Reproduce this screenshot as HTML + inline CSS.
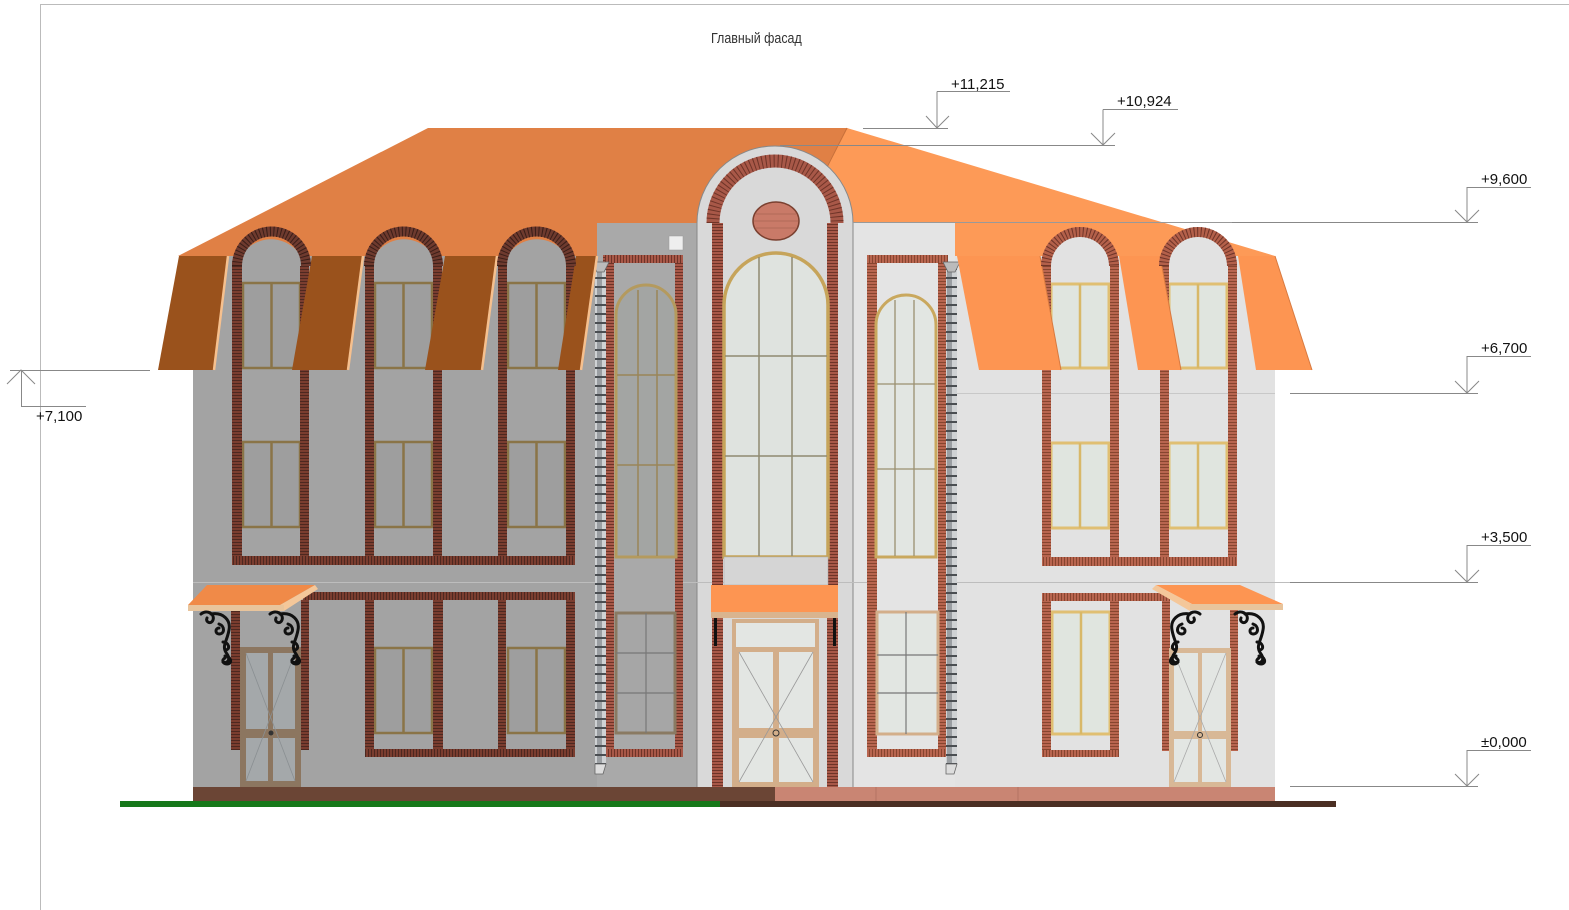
<!DOCTYPE html>
<html><head><meta charset="utf-8"><style>
html,body{margin:0;padding:0;background:#fff;}
svg{display:block;}
text{font-family:"Liberation Sans",sans-serif;}
</style></head><body>
<svg width="1569" height="910" viewBox="0 0 1569 910" xmlns="http://www.w3.org/2000/svg">
<defs>
<pattern id="pvL" width="10" height="3" patternUnits="userSpaceOnUse"><rect width="10" height="3" fill="#7a3d2f"/><rect y="2" width="10" height="1" fill="#4d2820"/></pattern>
<pattern id="phL" width="3" height="10" patternUnits="userSpaceOnUse"><rect width="3" height="10" fill="#7a3d2f"/><rect x="2" width="1" height="10" fill="#4d2820"/></pattern>
<pattern id="pvC" width="10" height="3" patternUnits="userSpaceOnUse"><rect width="10" height="3" fill="#a85848"/><rect y="2" width="10" height="1" fill="#6e3428"/></pattern>
<pattern id="phC" width="3" height="10" patternUnits="userSpaceOnUse"><rect width="3" height="10" fill="#a85848"/><rect x="2" width="1" height="10" fill="#6e3428"/></pattern>
<pattern id="pvR" width="10" height="3" patternUnits="userSpaceOnUse"><rect width="10" height="3" fill="#b8654f"/><rect y="2" width="10" height="1" fill="#87452f"/></pattern>
<pattern id="phR" width="3" height="10" patternUnits="userSpaceOnUse"><rect width="3" height="10" fill="#b8654f"/><rect x="2" width="1" height="10" fill="#87452f"/></pattern>
<pattern id="pipe" width="10" height="9" patternUnits="userSpaceOnUse"><rect width="10" height="9" fill="#9a9ea2"/><rect x="2" width="5" height="9" fill="#cfd2d4"/><rect y="7" width="10" height="2" fill="#4a4e52"/></pattern>
<g id="bracket" fill="none" stroke="#111" stroke-width="3" stroke-linecap="round">
<path d="M0,2 C6,-3 14,2 12,8 C10,13 4,10 6,6"/>
<path d="M10,2 C22,0 30,8 28,18 C26,30 20,34 26,42 C30,48 26,52 22,50"/>
<path d="M18,12 C24,14 24,22 18,22 C14,22 14,16 18,16"/>
<path d="M22,30 C28,30 30,38 24,38"/>
<path d="M24,44 C30,44 32,52 26,52 C22,52 20,48 24,46"/>
</g>
</defs>

<line x1="40" y1="4.5" x2="1569" y2="4.5" stroke="#bbb" stroke-width="1"/>
<line x1="40.5" y1="4" x2="40.5" y2="910" stroke="#bbb" stroke-width="1"/>
<text x="711" y="43" font-size="14.5" fill="#333" transform="translate(711 0) scale(0.86 1) translate(-711 0)">Главный фасад</text>

<polygon points="178,256 428,128 847,128 780,256" fill="#e08045"/>
<polygon points="847,128 1275,256 780,256" fill="#fd9a57"/>
<line x1="847" y1="128" x2="800" y2="220" stroke="#c8703a" stroke-width="1"/>

<rect x="193" y="256" width="404" height="532" fill="#a3a3a3"/>
<rect x="597" y="223" width="100" height="565" fill="#a9a9a9"/>
<rect x="853" y="223" width="102" height="565" fill="#e4e4e4"/>
<rect x="955" y="256" width="320" height="532" fill="#e2e2e2"/>
<path d="M697,788 V223 A78,77 0 0 1 853,223 V788 Z" fill="#d9d9d9" stroke="#888" stroke-width="1"/>

<line x1="955" y1="393.5" x2="1275" y2="393.5" stroke="#c8c8c8"/>
<line x1="193" y1="582.5" x2="1478" y2="582.5" stroke="#bdbdbd"/>
<line x1="853" y1="222.5" x2="1478" y2="222.5" stroke="#999"/>

<g fill="#9e9e9e" stroke="#8a7447" stroke-width="2.5">
<rect x="243" y="283" width="57" height="85"/><rect x="375" y="283" width="57" height="85"/><rect x="508" y="283" width="57" height="85"/>
<rect x="243" y="442" width="57" height="85"/><rect x="375" y="442" width="57" height="85"/><rect x="508" y="442" width="57" height="85"/>
<rect x="375" y="648" width="57" height="85"/><rect x="508" y="648" width="57" height="85"/>
</g>
<g stroke="#8a7447" stroke-width="2.5">
<line x1="271.5" y1="283" x2="271.5" y2="368"/><line x1="403.5" y1="283" x2="403.5" y2="368"/><line x1="536.5" y1="283" x2="536.5" y2="368"/>
<line x1="271.5" y1="442" x2="271.5" y2="527"/><line x1="403.5" y1="442" x2="403.5" y2="527"/><line x1="536.5" y1="442" x2="536.5" y2="527"/>
<line x1="403.5" y1="648" x2="403.5" y2="733"/><line x1="536.5" y1="648" x2="536.5" y2="733"/>
</g>
<g fill="url(#pvL)">
<rect x="232" y="262" width="10" height="300"/><rect x="300" y="262" width="9" height="300"/>
<rect x="365" y="262" width="9" height="300"/><rect x="433" y="262" width="9" height="300"/>
<rect x="498" y="262" width="9" height="300"/><rect x="566" y="262" width="9" height="300"/>
<rect x="365" y="592" width="9" height="164"/><rect x="433" y="592" width="10" height="164"/>
<rect x="498" y="592" width="8" height="164"/><rect x="566" y="592" width="9" height="164"/>
<rect x="231" y="610" width="9" height="140"/><rect x="301" y="600" width="8" height="150"/>
</g>
<g fill="url(#phL)">
<rect x="232" y="556" width="343" height="9"/>
<rect x="303" y="592" width="272" height="8"/>
<rect x="365" y="749" width="210" height="8"/>
</g>
<rect x="240" y="647" width="61" height="141" fill="#8c7660"/>
<rect x="246" y="653" width="22" height="76" fill="#a4a8aa"/><rect x="273" y="653" width="22" height="76" fill="#a4a8aa"/>
<rect x="246" y="738" width="22" height="43" fill="#a4a8aa"/><rect x="273" y="738" width="22" height="43" fill="#a4a8aa"/>
<g stroke="#8a8f92" stroke-width="0.8"><line x1="246" y1="653" x2="295" y2="781"/><line x1="295" y1="653" x2="246" y2="781"/></g>
<circle cx="271" cy="733" r="2.5" fill="#333"/>

<rect x="669" y="236" width="14" height="14" fill="#eee" stroke="#999" stroke-width="0.5"/>
<rect x="603" y="255" width="80" height="502" fill="url(#pvC)"/>
<rect x="605" y="255" width="78" height="8" fill="url(#phC)"/>
<rect x="605" y="749" width="78" height="8" fill="url(#phC)"/>
<rect x="614" y="263" width="61" height="486" fill="#a9a9a9"/>
<path d="M616,557 V315 A30,30 0 0 1 676,315 V557 Z" fill="#a3a5a3" stroke="#b49a5e" stroke-width="3"/>
<g stroke="#9a8558" stroke-width="1.5"><line x1="638" y1="290" x2="638" y2="556"/><line x1="657" y1="290" x2="657" y2="556"/><line x1="617" y1="375" x2="675" y2="375"/><line x1="617" y1="465" x2="675" y2="465"/></g>
<rect x="616" y="613" width="59" height="120" fill="#a6a6a6" stroke="#8a7a62" stroke-width="3"/>
<g stroke="#777" stroke-width="1.2"><line x1="646" y1="613" x2="646" y2="733"/><line x1="616" y1="653" x2="675" y2="653"/><line x1="616" y1="693" x2="675" y2="693"/></g>
<rect x="595" y="264" width="11" height="500" fill="url(#pipe)"/>
<polygon points="592,262 609,262 604,272 597,272" fill="#bbb" stroke="#666" stroke-width="0.8"/>
<path d="M595,764 h11 l-3,10 h-8 z" fill="#ddd" stroke="#666" stroke-width="0.8"/>

<path d="M713,223 A62,62 0 0 1 837,223" fill="none" stroke="#a85848" stroke-width="13"/>
<path d="M713,223 A62,62 0 0 1 837,223" fill="none" stroke="#6e3428" stroke-width="13" stroke-dasharray="1 3"/>
<rect x="712" y="223" width="11" height="565" fill="url(#pvC)"/>
<rect x="827" y="223" width="11" height="565" fill="url(#pvC)"/>
<ellipse cx="776" cy="221" rx="23" ry="19" fill="#c97a68" stroke="#7a4030" stroke-width="1.5"/>
<g stroke="#a86454" stroke-width="0.8"><line x1="756" y1="214" x2="796" y2="214"/><line x1="754" y1="221" x2="798" y2="221"/><line x1="756" y1="228" x2="796" y2="228"/></g>
<path d="M724,557 V305 A52,52 0 0 1 828,305 V557 Z" fill="#dfe3df" stroke="#c6a45a" stroke-width="3.5"/>
<g stroke="#8f8a70" stroke-width="1.5"><line x1="759" y1="257" x2="759" y2="556"/><line x1="792" y1="257" x2="792" y2="556"/><line x1="725" y1="356" x2="827" y2="356"/><line x1="725" y1="456" x2="827" y2="456"/></g>
<rect x="724" y="557" width="104" height="28" fill="#d5d5d5" stroke="#aaa" stroke-width="0.5"/>
<rect x="711" y="585" width="127" height="28" fill="#fd9552"/>
<rect x="711" y="612" width="127" height="6" fill="#d9b48f"/>
<rect x="714" y="618" width="3" height="28" fill="#111"/><rect x="833" y="618" width="3" height="28" fill="#111"/>
<rect x="732" y="619" width="87" height="169" fill="#d3ae8a"/>
<rect x="736" y="623" width="79" height="24" fill="#e3e6e3"/>
<rect x="739" y="652" width="34" height="76" fill="#e3e6e3"/><rect x="779" y="652" width="34" height="76" fill="#e3e6e3"/>
<rect x="739" y="738" width="34" height="44" fill="#e3e6e3"/><rect x="779" y="738" width="34" height="44" fill="#e3e6e3"/>
<g stroke="#999" stroke-width="0.8"><line x1="739" y1="652" x2="813" y2="782"/><line x1="813" y1="652" x2="739" y2="782"/></g>
<circle cx="776" cy="733" r="3" fill="none" stroke="#333"/>

<rect x="867" y="255" width="81" height="502" fill="url(#pvR)"/>
<rect x="867" y="255" width="81" height="8" fill="url(#phR)"/>
<rect x="867" y="749" width="81" height="8" fill="url(#phR)"/>
<rect x="877" y="263" width="61" height="486" fill="#e4e4e4"/>
<path d="M876,557 V325 A30,30 0 0 1 936,325 V557 Z" fill="#e2e6e2" stroke="#c9a85e" stroke-width="3"/>
<g stroke="#9a9070" stroke-width="1.3"><line x1="895" y1="300" x2="895" y2="556"/><line x1="914" y1="300" x2="914" y2="556"/><line x1="877" y1="384" x2="935" y2="384"/><line x1="877" y1="469" x2="935" y2="469"/></g>
<rect x="877" y="612" width="61" height="122" fill="#e2e6e2" stroke="#d3ae8a" stroke-width="3"/>
<g stroke="#777" stroke-width="1.2"><line x1="906" y1="612" x2="906" y2="734"/><line x1="877" y1="655" x2="938" y2="655"/><line x1="877" y1="693" x2="938" y2="693"/></g>
<rect x="946" y="264" width="11" height="500" fill="url(#pipe)"/>
<polygon points="943,262 960,262 955,272 948,272" fill="#bbb" stroke="#666" stroke-width="0.8"/>
<path d="M946,764 h11 l-3,10 h-8 z" fill="#ddd" stroke="#666" stroke-width="0.8"/>

<g fill="#e0e5df" stroke="#e0bf72" stroke-width="3">
<rect x="1051" y="284" width="58" height="84"/><rect x="1169" y="284" width="58" height="84"/>
<rect x="1051" y="443" width="58" height="85"/><rect x="1169" y="443" width="58" height="85"/>
<rect x="1052" y="612" width="58" height="122"/>
</g>
<g stroke="#d8b868" stroke-width="2.5">
<line x1="1080" y1="284" x2="1080" y2="368"/><line x1="1198" y1="284" x2="1198" y2="368"/>
<line x1="1080" y1="443" x2="1080" y2="528"/><line x1="1198" y1="443" x2="1198" y2="528"/>
<line x1="1081" y1="612" x2="1081" y2="734"/>
</g>
<g fill="url(#pvR)">
<rect x="1042" y="262" width="9" height="300"/><rect x="1110" y="262" width="9" height="300"/>
<rect x="1160" y="262" width="9" height="300"/><rect x="1228" y="262" width="9" height="300"/>
<rect x="1042" y="593" width="9" height="164"/><rect x="1110" y="600" width="9" height="157"/>
<rect x="1162" y="593" width="8" height="158"/><rect x="1230" y="600" width="8" height="151"/>
</g>
<g fill="url(#phR)">
<rect x="1042" y="557" width="195" height="9"/>
<rect x="1042" y="593" width="128" height="8"/>
<rect x="1042" y="750" width="77" height="7"/>
</g>
<rect x="1169" y="648" width="62" height="140" fill="#d8b896"/>
<rect x="1174" y="653" width="24" height="78" fill="#e3e6e3"/><rect x="1202" y="653" width="24" height="78" fill="#e3e6e3"/>
<rect x="1174" y="739" width="24" height="43" fill="#e3e6e3"/><rect x="1202" y="739" width="24" height="43" fill="#e3e6e3"/>
<g stroke="#aaa" stroke-width="0.8"><line x1="1174" y1="653" x2="1226" y2="782"/><line x1="1226" y1="653" x2="1174" y2="782"/></g>
<circle cx="1200" cy="735" r="2.5" fill="none" stroke="#333"/>

<g fill="#9a521c">
<polygon points="179,256 228,256 214,370 158,370"/>
<polygon points="312,256 363,256 348,370 292,370"/>
<polygon points="445,256 497,256 482,370 425,370"/>
<polygon points="576,256 597,256 581,370 558,370"/>
</g>
<g stroke="#f6c08e" stroke-width="2.5">
<line x1="228" y1="256" x2="214" y2="370"/><line x1="363" y1="256" x2="348" y2="370"/><line x1="497" y1="256" x2="482" y2="370"/><line x1="597" y1="256" x2="581" y2="370"/>
</g>
<g fill="#fd9552">
<polygon points="957,256 1040,256 1061,370 979,370"/>
<polygon points="1119,256 1160,256 1181,370 1138,370"/>
<polygon points="1238,256 1275,256 1312,370 1256,370"/>
</g>
<g stroke="#d87a40" stroke-width="1">
<line x1="1040" y1="256" x2="1061" y2="370"/><line x1="1160" y1="256" x2="1181" y2="370"/><line x1="1275" y1="256" x2="1312" y2="370"/>
</g>

<g>
<path d="M237,266 A35,35 0 0 1 305,266 Z" fill="#a3a3a3"/>
<path d="M370,266 A35,35 0 0 1 438,266 Z" fill="#a3a3a3"/>
<path d="M503,266 A35,35 0 0 1 571,266 Z" fill="#a3a3a3"/>
</g>
<g fill="none" stroke="#6e3a2e" stroke-width="10">
<path d="M237,266 A34.5,34.5 0 0 1 306,266"/><path d="M369,266 A34.5,34.5 0 0 1 438,266"/><path d="M502,266 A34.5,34.5 0 0 1 571,266"/>
</g>
<g fill="none" stroke="#3a1e18" stroke-width="10" stroke-dasharray="1 2.5">
<path d="M237,266 A34.5,34.5 0 0 1 306,266"/><path d="M369,266 A34.5,34.5 0 0 1 438,266"/><path d="M502,266 A34.5,34.5 0 0 1 571,266"/>
</g>
<g>
<path d="M1046,266 A34,34 0 0 1 1114,266 Z" fill="#e2e2e2"/>
<path d="M1164,266 A34,34 0 0 1 1232,266 Z" fill="#e2e2e2"/>
</g>
<g fill="none" stroke="#b3604a" stroke-width="10">
<path d="M1046,266 A34,34 0 0 1 1114,266"/><path d="M1164,266 A34,34 0 0 1 1232,266"/>
</g>
<g fill="none" stroke="#6e3428" stroke-width="10" stroke-dasharray="1 2.5">
<path d="M1046,266 A34,34 0 0 1 1114,266"/><path d="M1164,266 A34,34 0 0 1 1232,266"/>
</g>

<polygon points="207,585 315,585 280,605 188,605" fill="#f08a48"/>
<polygon points="280,605 315,585 318,589 284,611" fill="#f4c79a"/>
<rect x="188" y="605" width="96" height="6" fill="#e8c49c"/>
<use href="#bracket" x="201" y="612"/>
<use href="#bracket" x="270" y="612"/>
<polygon points="1156,585 1240,585 1283,604 1192,604" fill="#fd9552"/>
<polygon points="1156,585 1192,604 1190,611 1152,589" fill="#f4c79a"/>
<rect x="1190" y="604" width="93" height="6" fill="#e8c49c"/>
<use href="#bracket" x="1200" y="612" transform="translate(2400 0) scale(-1 1)"/>
<use href="#bracket" x="1235" y="612"/>

<rect x="193" y="787" width="582" height="14" fill="#6b4535"/>
<rect x="775" y="787" width="500" height="14" fill="#c98573"/>
<line x1="876" y1="787" x2="876" y2="801" stroke="#b07060" stroke-width="0.8"/>
<line x1="1018" y1="787" x2="1018" y2="801" stroke="#b07060" stroke-width="0.8"/>
<rect x="120" y="801" width="600" height="6" fill="#16781a"/>
<rect x="720" y="801" width="616" height="6" fill="#4b2f23"/>

<g stroke="#888" stroke-width="1" fill="none">
<line x1="863" y1="128.5" x2="948" y2="128.5"/><polyline points="937,91.5 937,128"/><polyline points="926,116 937,128 949,116"/><line x1="937" y1="91.5" x2="1010" y2="91.5"/>
<line x1="780" y1="145.5" x2="1115" y2="145.5"/><polyline points="1103,109.5 1103,145"/><polyline points="1091,133 1103,145 1115,133"/><line x1="1103" y1="109.5" x2="1178" y2="109.5"/>
<line x1="1232" y1="222.5" x2="1478" y2="222.5"/><line x1="1467" y1="187" x2="1467" y2="222"/><polyline points="1455,210 1467,222 1479,210"/><line x1="1467" y1="187.5" x2="1531" y2="187.5"/>
<line x1="1290" y1="393.5" x2="1478" y2="393.5"/><line x1="1467" y1="356" x2="1467" y2="393"/><polyline points="1455,381 1467,393 1479,381"/><line x1="1467" y1="356.5" x2="1531" y2="356.5"/>
<line x1="1290" y1="582.5" x2="1478" y2="582.5"/><line x1="1467" y1="545" x2="1467" y2="582"/><polyline points="1455,570 1467,582 1479,570"/><line x1="1467" y1="545.5" x2="1531" y2="545.5"/>
<line x1="1290" y1="786.5" x2="1478" y2="786.5"/><line x1="1467" y1="750" x2="1467" y2="786"/><polyline points="1455,774 1467,786 1479,774"/><line x1="1467" y1="750.5" x2="1531" y2="750.5"/>
<line x1="10" y1="370.5" x2="150" y2="370.5"/><line x1="21.5" y1="370" x2="21.5" y2="406"/><polyline points="7,384 21,370 35,384"/><line x1="21" y1="406.5" x2="86" y2="406.5"/>
</g>
<g font-size="15" fill="#111">
<text x="951" y="89">+11,215</text>
<text x="1117" y="106">+10,924</text>
<text x="1481" y="184">+9,600</text>
<text x="1481" y="353">+6,700</text>
<text x="1481" y="542">+3,500</text>
<text x="1481" y="747">±0,000</text>
<text x="36" y="421">+7,100</text>
</g>
</svg>
</body></html>
